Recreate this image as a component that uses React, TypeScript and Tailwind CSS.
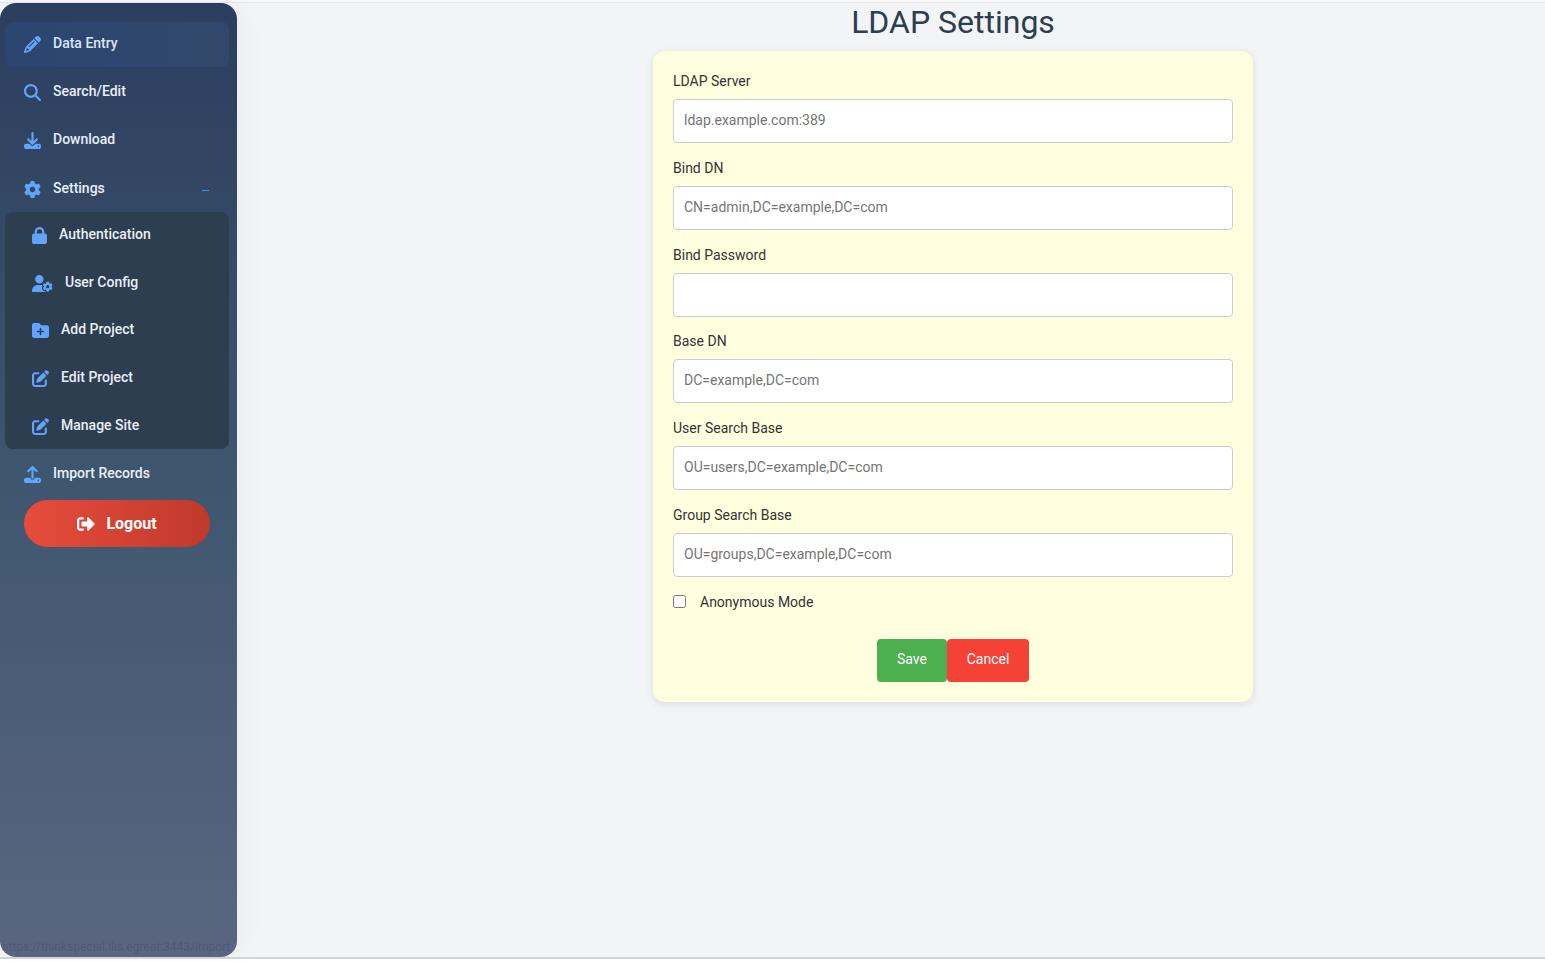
import { FaSignOutAlt } from "react-icons/fa";
import {
  FaPencil,
  FaMagnifyingGlass,
  FaDownload,
  FaGear,
  FaLock,
  FaUserGear,
  FaFolderPlus,
  FaPenToSquare,
  FaUpload,
} from "react-icons/fa6";

const fields = [
  { label: "LDAP Server", placeholder: "ldap.example.com:389" },
  { label: "Bind DN", placeholder: "CN=admin,DC=example,DC=com" },
  { label: "Bind Password", placeholder: "" },
  { label: "Base DN", placeholder: "DC=example,DC=com" },
  { label: "User Search Base", placeholder: "OU=users,DC=example,DC=com" },
  { label: "Group Search Base", placeholder: "OU=groups,DC=example,DC=com" },
];

const NavItem = ({ icon, label, active }: { icon: React.ReactNode; label: string; active?: boolean }) => (
  <div
    className={`flex h-[45px] items-center gap-3 rounded-lg pb-[2px] pl-[18px] text-[14px] font-medium ${
      active ? "bg-gradient-to-r from-[#2c4672] to-[#31486a] text-[#dbe6f5]" : "text-[#e8eef7]"
    }`}
  >
    <span className="flex w-[18px] translate-y-[1px] justify-center text-[17px] text-[#60a5fa]">{icon}</span>
    {label}
  </div>
);

const SubItem = ({ icon, label }: { icon: React.ReactNode; label: string }) => (
  <div className="flex h-[47.75px] items-center gap-3 pb-[3px] pl-[27px] text-[14px] font-medium text-[#e8eef7]">
    <span className="translate-y-[1px] text-[#60a5fa]">{icon}</span>
    {label}
  </div>
);

const App = () => {
  return (
    <div className="relative flex h-[962px] flex-col overflow-hidden bg-white font-['Roboto',sans-serif]">
      <div className="h-[2px] bg-[#f7f7f8]" />
      <div className="flex h-[955px] border-t border-[#e6e7ea] bg-[#f3f4f6]">
        <aside className="flex w-[237px] shrink-0 flex-col rounded-2xl bg-gradient-to-b from-[#2b3e5e] via-[#3f566f] to-[#5a6680] px-[5px] pt-[19px] shadow-[8px_0_24px_rgba(0,0,0,0.03)]">
          <div className="flex flex-col gap-[3px] pr-[3px]">
            <NavItem active icon={<FaPencil />} label="Data Entry" />
            <NavItem icon={<FaMagnifyingGlass />} label="Search/Edit" />
            <NavItem icon={<FaDownload />} label="Download" />
            <div className="relative mt-px">
              <NavItem icon={<FaGear />} label="Settings" />
              <span className="absolute right-[20px] top-[23px] h-px w-[7px] bg-[#4a8af4]" />
            </div>
          </div>
          <div className="mr-[3px] h-[237px] rounded-lg bg-[#2c3e50]">
            <SubItem icon={<FaLock className="h-[17px] w-[15px]" />} label="Authentication" />
            <SubItem icon={<FaUserGear className="h-[17px] w-[21px]" />} label="User Config" />
            <SubItem icon={<FaFolderPlus className="h-[17px] w-[17px]" />} label="Add Project" />
            <SubItem icon={<FaPenToSquare className="h-[17px] w-[17px]" />} label="Edit Project" />
            <SubItem icon={<FaPenToSquare className="h-[17px] w-[17px]" />} label="Manage Site" />
          </div>
          <div className="mt-[3px] pr-[3px]">
            <NavItem icon={<FaUpload />} label="Import Records" />
          </div>
          <div className="ml-[19px] mt-[3px] flex h-[47px] w-[186px] items-center justify-center gap-[11px] rounded-full bg-gradient-to-r from-[#e74c3c] to-[#c0392b] text-[16px] font-bold text-white">
            <FaSignOutAlt className="text-[18px]" />
            Logout
          </div>
        </aside>

        <main className="ml-[124px] flex flex-1 flex-col items-center">
          <h1 className="text-[32px] leading-[38px] text-[#2c3e50]">LDAP Settings</h1>
          <form className="mt-[10px] w-[600px] rounded-xl bg-[#ffffe0] p-5 shadow-[0_2px_8px_rgba(0,0,0,0.1)]">
            {fields.map((f) => (
              <div key={f.label} className="mb-[14.8px]">
                <label className="mb-[8px] block text-[14px] leading-[20px] text-[#333]">{f.label}</label>
                <input
                  placeholder={f.placeholder}
                  className="h-[44px] w-full rounded border border-[#ccc] bg-white px-[10px] pb-[2px] text-[14px] placeholder:text-[#757575]"
                />
              </div>
            ))}
            <div className="flex items-center gap-[14px] text-[14px] leading-[20px] text-[#333]">
              <input type="checkbox" className="h-[13px] w-[13px]" />
              Anonymous Mode
            </div>
            <div className="mt-[27px] flex justify-center">
              <button className="h-[43px] w-[70px] rounded bg-[#4caf50] pb-[2px] text-[14px] text-white">Save</button>
              <button className="h-[43px] w-[82px] rounded bg-[#f44336] pb-[2px] text-[14px] text-white">Cancel</button>
            </div>
          </form>
        </main>
      </div>
      <div className="h-[2px] bg-[#d4d5d8]" />
      <div className="absolute left-[2px] top-[938px] w-[230px] overflow-hidden whitespace-nowrap text-[12px] text-[#2b3e5e]/30">
        https://thinkspecial.ilis.egreat:3443/import
      </div>
    </div>
  );
};

export default App;
